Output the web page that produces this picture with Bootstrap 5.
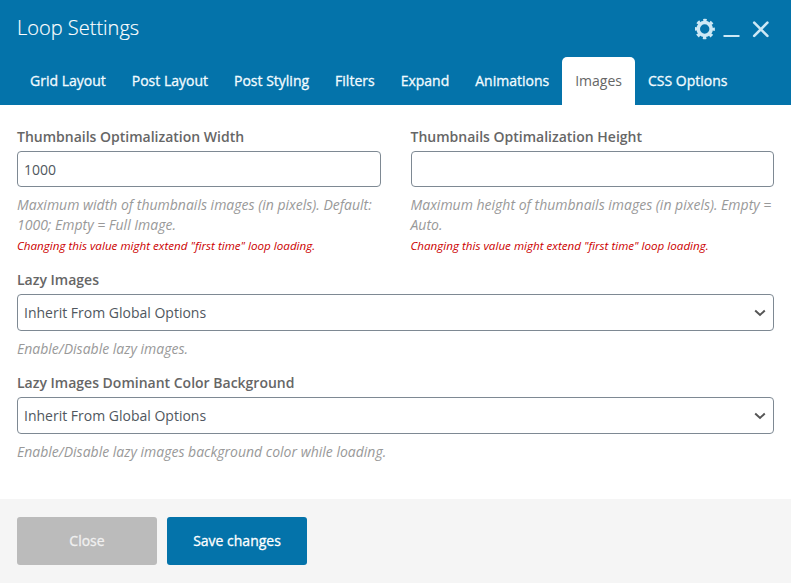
<!DOCTYPE html>
<html lang="en">
<head>
<meta charset="utf-8">
<meta name="viewport" content="width=device-width, initial-scale=1">
<title>Loop Settings</title>
<link href="https://cdn.jsdelivr.net/npm/bootstrap@5.3.0/dist/css/bootstrap.min.css" rel="stylesheet">
<style>
body{font-family:"Open Sans",sans-serif;font-size:14px;line-height:20px;color:#5f5f5f;min-height:583px}
.panel-head{background:#0473aa;height:105px;padding:0 17px}
.panel-title{font-size:20px;font-weight:300;line-height:28px;color:#fff;padding-top:14px;-webkit-text-stroke:.15px currentColor}
.head-icons{padding-top:18px;padding-right:3px;color:#cde8f5}
.settings-tabs{border:0}
.settings-tabs .nav-link{border:0;border-radius:5px 5px 0 0;height:48px;margin-bottom:0;padding:14px 13px;color:#f2fbff;white-space:nowrap;-webkit-text-stroke:.3px currentColor}
.settings-tabs .nav-link.active{background:#fff;color:#666;-webkit-text-stroke:0}
.panel-main{height:394px;padding:22px 17px 0}
.fields{--bs-gutter-x:30px}
.form-label{font-weight:600;line-height:20px;margin-bottom:4px;display:block;color:#666}
.form-control,.form-select{font-size:14px;line-height:20px;border:1px solid #7e8993;border-radius:4px;padding:0 6px;color:#50575e;height:36px}
.form-select{height:37px;background-image:url("data:image/svg+xml,%3Csvg xmlns='http://www.w3.org/2000/svg' viewBox='0 0 12 8'%3E%3Cpath d='M1.2 1.500 6 6l4.800-4.500' fill='none' stroke='%23555' stroke-width='2'/%3E%3C/svg%3E");background-size:12px 8px;background-position:right 7px top 14px}
.hint{font-style:italic;color:#999;margin:8px 0 0}
.warn{font-style:italic;font-size:11.63px;line-height:21px;color:#c00;margin:0}
.field-lazy{margin-top:14px}
.panel-foot{background:#f5f5f5;height:84px;padding:18px 17px;gap:10px}
.panel-foot .btn{width:140px;height:48px;padding:0 0 1px;border:0;border-radius:3px;font-size:14px;color:#fff;-webkit-text-stroke:.3px currentColor}
.panel-foot .btn-close-panel,.panel-foot .btn-close-panel:hover{background:#bbb;color:#f0f0f0}
.btn-save,.btn-save:hover{background:#0473aa}
</style>
<script src="https://cdn.jsdelivr.net/npm/bootstrap@5.3.0/dist/js/bootstrap.bundle.min.js"></script>
</head>
<body class="d-flex flex-column bg-white">
<header class="panel-head d-flex flex-column justify-content-between">
  <div class="d-flex justify-content-between">
    <h1 class="panel-title mb-0">Loop Settings</h1>
    <div class="head-icons d-flex">
      <svg width="76" height="22" viewBox="0 0 76 22" fill="none" stroke="currentColor" aria-hidden="true">
        <circle cx="9.700" cy="11" r="6.500" stroke-width="3.600"/>
        <circle cx="9.700" cy="11" r="8.700" stroke-width="3" stroke-dasharray="3.400 3.433" stroke-dashoffset="1.700"/>
        <path d="M28.500 18h16" stroke-width="2"/>
        <path d="m59.200 4.700 13.200 13.200m0-13.200-13.200 13.200" stroke-width="2.600" stroke-linecap="round"/>
      </svg>
    </div>
  </div>
  <ul class="nav nav-tabs settings-tabs flex-nowrap">
    <li class="nav-item"><a class="nav-link" href="#">Grid Layout</a></li>
    <li class="nav-item"><a class="nav-link" href="#">Post Layout</a></li>
    <li class="nav-item"><a class="nav-link" href="#">Post Styling</a></li>
    <li class="nav-item"><a class="nav-link" href="#">Filters</a></li>
    <li class="nav-item"><a class="nav-link" href="#">Expand</a></li>
    <li class="nav-item"><a class="nav-link" href="#">Animations</a></li>
    <li class="nav-item"><a class="nav-link active" href="#">Images</a></li>
    <li class="nav-item"><a class="nav-link" href="#">CSS Options</a></li>
  </ul>
</header>
<main class="panel-main">
  <div class="row fields">
    <div class="col-6">
      <label class="form-label" for="tw">Thumbnails Optimalization Width</label>
      <input id="tw" class="form-control" type="text" value="1000">
      <p class="hint">Maximum width of thumbnails images (in pixels). Default: 1000; Empty = Full Image.</p>
      <p class="warn">Changing this value might extend "first time" loop loading.</p>
    </div>
    <div class="col-6">
      <label class="form-label" for="th">Thumbnails Optimalization Height</label>
      <input id="th" class="form-control" type="text">
      <p class="hint">Maximum height of thumbnails images (in pixels). Empty = Auto.</p>
      <p class="warn">Changing this value might extend "first time" loop loading.</p>
    </div>
    <div class="col-12 field-lazy">
      <label class="form-label" for="lz">Lazy Images</label>
      <select id="lz" class="form-select"><option>Inherit From Global Options</option></select>
      <p class="hint">Enable/Disable lazy images.</p>
    </div>
    <div class="col-12 field-lazy">
      <label class="form-label" for="lc">Lazy Images Dominant Color Background</label>
      <select id="lc" class="form-select"><option>Inherit From Global Options</option></select>
      <p class="hint">Enable/Disable lazy images background color while loading.</p>
    </div>
  </div>
</main>
<footer class="panel-foot d-flex">
  <button type="button" class="btn btn-close-panel">Close</button>
  <button type="button" class="btn btn-save">Save changes</button>
</footer>
</body>
</html>
